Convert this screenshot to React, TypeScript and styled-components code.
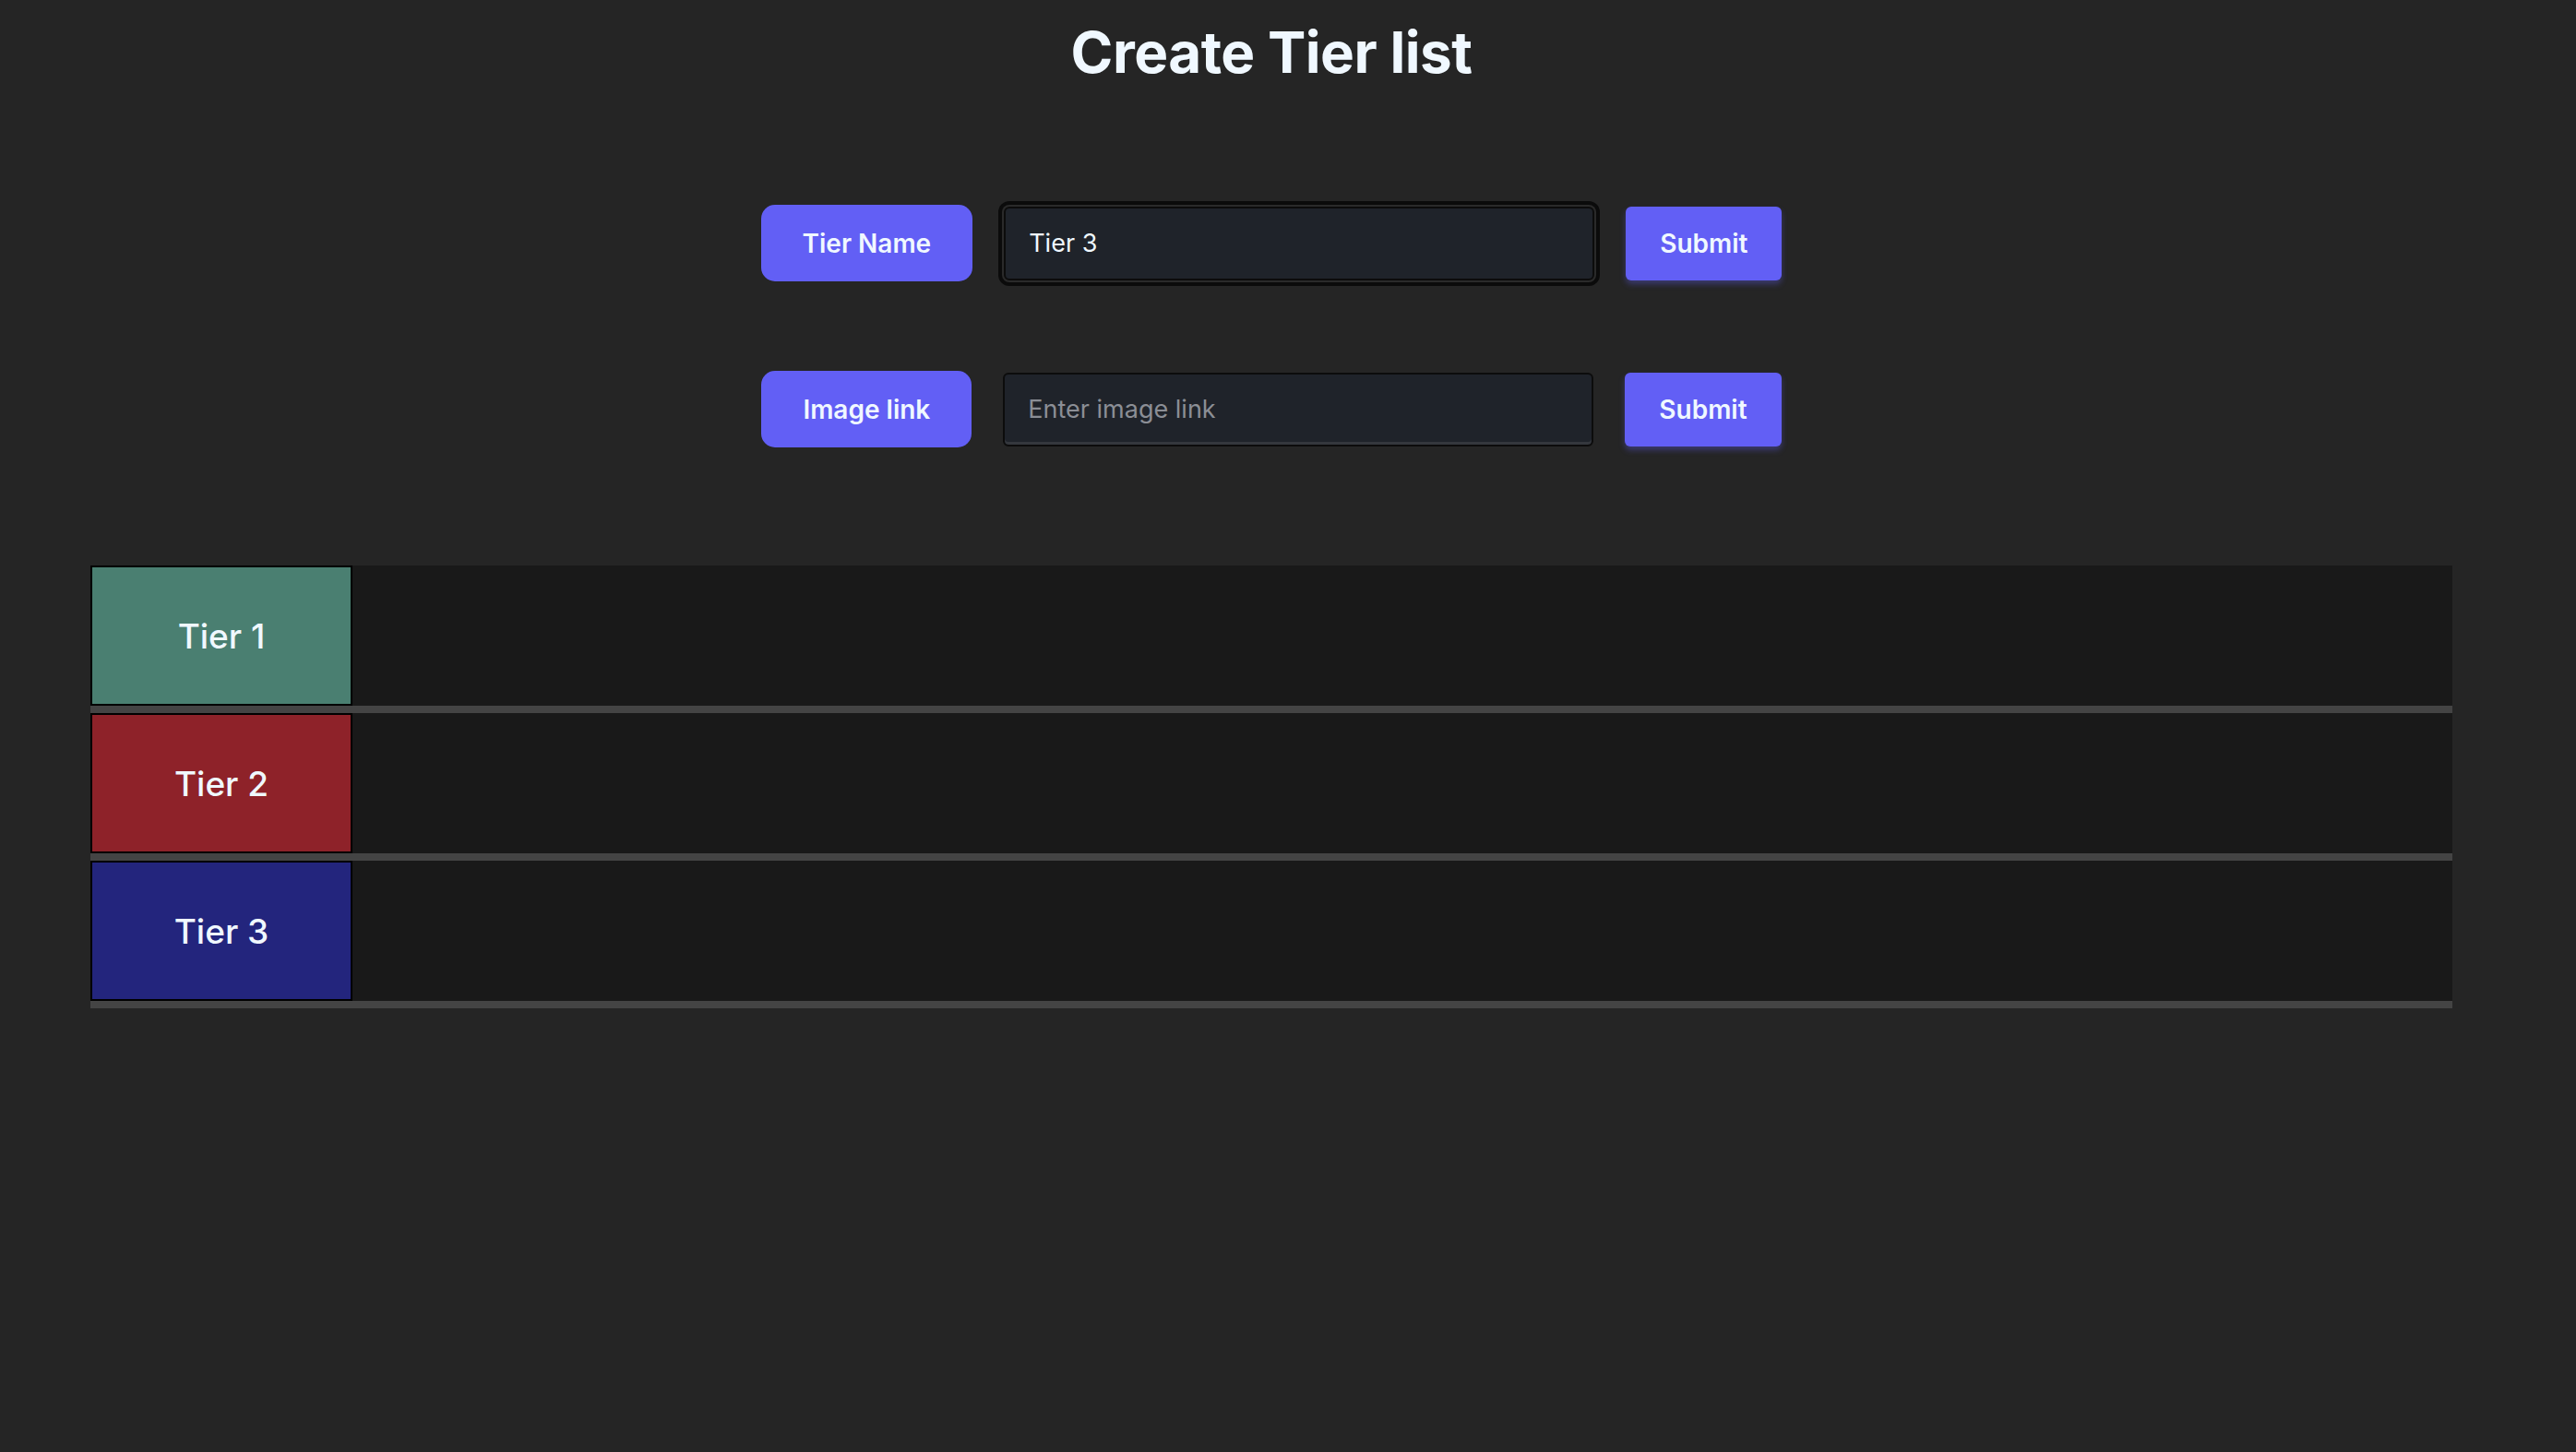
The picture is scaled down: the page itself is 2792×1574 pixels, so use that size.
import React, { useState } from "react";
import styled, { createGlobalStyle } from "styled-components";

const GlobalStyle = createGlobalStyle`
  body {
    margin: 0;
    background-color: #252525;
    font-family: Inter, "Noto Sans", sans-serif;
  }
`;

const Page = styled.div`
  width: 2560px;
  padding: 0 134px 0 98px;
`;

const Title = styled.h1`
  margin: 0;
  padding-top: 15px;
  line-height: 84px;
  font-size: 62px;
  font-weight: 700;
  letter-spacing: -0.5px;
  text-align: center;
  color: aliceblue;
`;

const Form = styled.div`
  display: flex;
  flex-direction: column;
  align-items: center;
  gap: 97px;
  margin-top: 123px;
`;

const FormRow = styled.div`
  display: flex;
  align-items: center;
  gap: 34px;
`;

const FieldLabel = styled.label`
  display: flex;
  align-items: center;
  justify-content: center;
  height: 83px;
  padding: 0 45px;
  border-radius: 15px;
  background-color: #625ff5;
  color: aliceblue;
  font-size: 28px;
  font-weight: 600;
`;

const TextInput = styled.input<{ focused?: boolean }>`
  width: 640px;
  height: 80px;
  box-sizing: border-box;
  padding: 0 25px;
  border: 2px solid #0c0c0c;
  border-radius: 6px;
  background-color: #1f232a;
  color: aliceblue;
  font-family: inherit;
  font-size: 27px;
  outline: none;
  box-shadow: ${({ focused }) =>
    focused
      ? "0 0 0 2px #2a2a2a, 0 0 0 6px #0b0b0b"
      : "inset 0 -3px 0 #34373d"};

  &::placeholder {
    color: #8b8e95;
  }
`;

const SubmitButton = styled.button`
  height: 80px;
  padding: 0 37px;
  border: none;
  border-radius: 6px;
  background-color: #625ff5;
  color: aliceblue;
  font-family: inherit;
  font-size: 28px;
  font-weight: 600;
  box-shadow: 0 4px 6px rgba(98, 95, 245, 0.35);
  cursor: pointer;
`;

const TierList = styled.div`
  display: flex;
  flex-direction: column;
  margin-top: 128px;
`;

const TierRow = styled.div`
  display: flex;
  height: 160px;
  box-sizing: border-box;
  background-color: #191919;
  border-bottom: 8px solid #444444;
`;

const TierLabel = styled.div<{ color: string }>`
  display: flex;
  align-items: center;
  justify-content: center;
  width: 284px;
  box-sizing: border-box;
  border: 2px solid #000;
  background-color: ${({ color }) => color};
  color: aliceblue;
  font-size: 37px;
  font-weight: 500;
`;

const TierItems = styled.div`
  flex: 1;
  display: flex;
  align-items: center;
`;

const tiers = [
  { name: "Tier 1", color: "#4a7f71" },
  { name: "Tier 2", color: "#8e2229" },
  { name: "Tier 3", color: "#23257d" },
];

export default function App() {
  const [tierName, setTierName] = useState("Tier 3");
  const [imageLink, setImageLink] = useState("");

  return (
    <Page>
      <GlobalStyle />
      <Title>Create Tier list</Title>
      <Form>
        <FormRow>
          <FieldLabel>Tier Name</FieldLabel>
          <TextInput
            focused
            value={tierName}
            onChange={(e) => setTierName(e.target.value)}
          />
          <SubmitButton>Submit</SubmitButton>
        </FormRow>
        <FormRow>
          <FieldLabel>Image link</FieldLabel>
          <TextInput
            placeholder="Enter image link"
            value={imageLink}
            onChange={(e) => setImageLink(e.target.value)}
          />
          <SubmitButton>Submit</SubmitButton>
        </FormRow>
      </Form>
      <TierList>
        {tiers.map((tier) => (
          <TierRow key={tier.name}>
            <TierLabel color={tier.color}>{tier.name}</TierLabel>
            <TierItems />
          </TierRow>
        ))}
      </TierList>
    </Page>
  );
}
